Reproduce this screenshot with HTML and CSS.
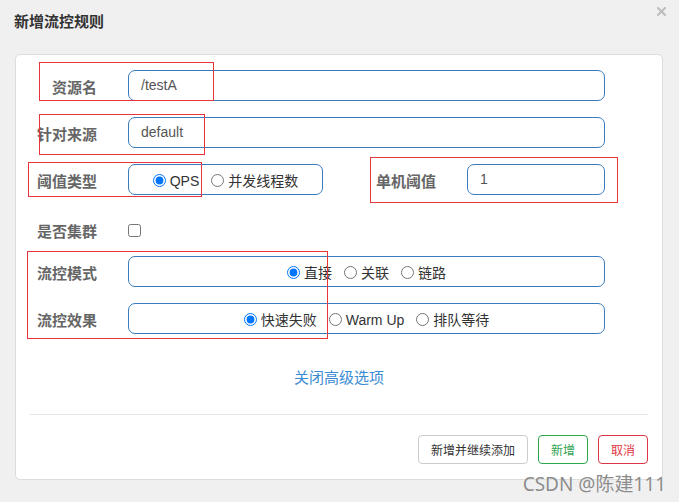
FILE: index.html
```html
<!DOCTYPE html>
<html lang="zh-CN">
<head>
<meta charset="utf-8">
<title>新增流控规则</title>
<link rel="stylesheet" href="styles.css">
</head>
<body>
<div class="page">
  <div class="header">
    <div class="title">新增流控规则</div>
    <div class="close" aria-label="关闭">
      <svg width="9" height="9" viewBox="0 0 9 9"><path d="M1 1 L8 8 M8 1 L1 8" stroke="#bdbdbd" stroke-width="2" stroke-linecap="square"/></svg>
    </div>
  </div>

  <div class="card">
    <div class="form">
      <div class="row">
        <label class="lbl">资源名</label>
        <div class="input">/testA</div>
      </div>
      <div class="row">
        <label class="lbl">针对来源</label>
        <div class="input">default</div>
      </div>
      <div class="row">
        <label class="lbl">阈值类型</label>
        <div class="group group-narrow">
          <label class="opt"><input type="radio" name="grade" checked><span>QPS</span></label>
          <label class="opt"><input type="radio" name="grade"><span>并发线程数</span></label>
        </div>
        <label class="lbl lbl2">单机阈值</label>
        <div class="input">1</div>
      </div>
      <div class="row row-check">
        <label class="lbl">是否集群</label>
        <input class="check" type="checkbox">
      </div>
      <div class="row">
        <label class="lbl">流控模式</label>
        <div class="group">
          <label class="opt"><input type="radio" name="mode" checked><span>直接</span></label>
          <label class="opt"><input type="radio" name="mode"><span>关联</span></label>
          <label class="opt"><input type="radio" name="mode"><span>链路</span></label>
        </div>
      </div>
      <div class="row">
        <label class="lbl">流控效果</label>
        <div class="group">
          <label class="opt"><input type="radio" name="effect" checked><span>快速失败</span></label>
          <label class="opt"><input type="radio" name="effect"><span>Warm Up</span></label>
          <label class="opt"><input type="radio" name="effect"><span>排队等待</span></label>
        </div>
      </div>
    </div>

    <div class="more"><a class="link">关闭高级选项</a></div>
    <div class="divider"></div>

    <div class="footer">
      <button class="btn btn-default">新增并继续添加</button>
      <button class="btn btn-success">新增</button>
      <button class="btn btn-danger">取消</button>
    </div>
  </div>

  <div class="mark mark1"></div>
  <div class="mark mark2"></div>
  <div class="mark mark3"></div>
  <div class="mark mark4"></div>
  <div class="mark mark5"></div>

  <div class="watermark">CSDN @陈建111</div>
</div>
</body>
</html>
```

FILE: styles.css
```css
* { box-sizing: border-box; }

html, body {
  margin: 0;
  padding: 0;
  background: #f0f0f0;
}

body {
  font-family: "Liberation Sans", "Noto Sans CJK SC", sans-serif;
  color: #333;
}

.page {
  position: relative;
  width: 679px;
  height: 502px;
  overflow: hidden;
  background: #f0f0f0;
}

.header {
  height: 54px;
  display: flex;
  justify-content: space-between;
  align-items: flex-start;
  padding: 0 13px 0 14px;
}

.title {
  margin-top: 12px;
  font-size: 15px;
  line-height: 20px;
  font-weight: bold;
  color: #333;
}

.close {
  margin-top: 7px;
  width: 9px;
  height: 9px;
  display: flex;
}

.card {
  margin-left: 15px;
  width: 648px;
  background: #fff;
  border: 1px solid #dcdcdc;
  border-radius: 5px;
  padding-bottom: 15px;
}

.form {
  padding: 15px 57px 0 0;
  display: flex;
  flex-direction: column;
  gap: 16px;
}

.row {
  display: flex;
  align-items: center;
  height: 31px;
}

.row-check {
  height: 21px;
  margin-top: 8px;
}

.lbl {
  width: 81px;
  flex: none;
  margin-right: 31px;
  text-align: right;
  font-family: "Noto Sans CJK SC", sans-serif;
  font-size: 15px;
  font-weight: bold;
  line-height: 20px;
  color: #666;
  padding-top: 3px;
  white-space: nowrap;
}

.lbl2 {
  width: 60px;
  margin-left: 53px;
  text-align: left;
}

.input {
  flex: 1;
  height: 31px;
  border: 1px solid #3a7bbd;
  border-radius: 7px;
  padding: 0 12px;
  font-size: 14px;
  line-height: 29px;
  color: #555;
}

.group {
  flex: 1;
  height: 31px;
  border: 1px solid #3a7bbd;
  border-radius: 7px;
  display: flex;
  align-items: center;
  justify-content: center;
  gap: 12px;
  padding-top: 2px;
}

.group-narrow {
  flex: none;
  width: 195px;
}

.opt {
  display: inline-flex;
  align-items: center;
  gap: 4px;
  font-size: 14px;
  line-height: 18px;
  color: #333;
  white-space: nowrap;
}

.opt input {
  margin: 0;
  width: 13px;
  height: 13px;
}

.check {
  margin: 2px 0 0 0;
  width: 13px;
  height: 13px;
}

.more {
  margin-top: 33px;
  text-align: center;
  line-height: 20px;
}

.link {
  font-family: "Noto Sans CJK SC", sans-serif;
  font-size: 15px;
  color: #3b8bd3;
  text-decoration: none;
}

.divider {
  margin: 26px 14px 0 14px;
  height: 1px;
  background: #e5e5e5;
}

.footer {
  display: flex;
  justify-content: flex-end;
  gap: 10px;
  padding: 20px 14px 0 0;
}

.btn {
  height: 29px;
  padding: 0 12px;
  font-family: "Noto Sans CJK SC", sans-serif;
  font-size: 12px;
  line-height: 27px;
  background: #fff;
  border: 1px solid #ccc;
  border-radius: 4px;
  color: #333;
}

.btn-success {
  border-color: #2ea44f;
  color: #2ea44f;
}

.btn-danger {
  border-color: #dc3545;
  color: #dc3545;
}

/* red annotation rectangles drawn over the dialog */
.mark {
  position: absolute;
  border: 1px solid #e8343a;
  pointer-events: none;
}
.mark1 { left: 39px; top: 62px; width: 175px; height: 39px; }
.mark2 { left: 39px; top: 114px; width: 166px; height: 41px; }
.mark3 { left: 28px; top: 162px; width: 174px; height: 35px; }
.mark4 { left: 370px; top: 157px; width: 248px; height: 46px; }
.mark5 { left: 27px; top: 251px; width: 301px; height: 88px; }

.watermark {
  position: absolute;
  right: 13px;
  bottom: 6px;
  font-family: "Noto Sans", "Noto Sans CJK SC", sans-serif;
  font-size: 19px;
  line-height: 24px;
  color: #8c8c8c;
  text-shadow: 0 0 1px rgba(255, 255, 255, 0.8);
  white-space: nowrap;
}
```
